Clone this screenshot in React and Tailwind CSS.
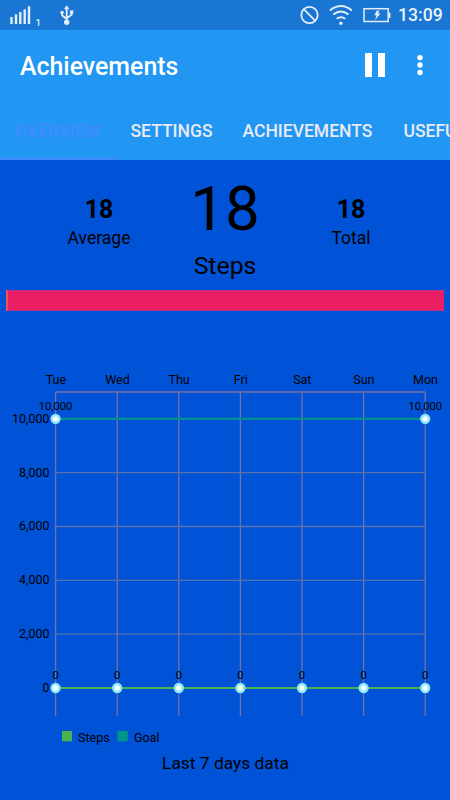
import React from 'react';

const days = ['Tue', 'Wed', 'Thu', 'Fri', 'Sat', 'Sun', 'Mon'];
const ticks = [10000, 8000, 6000, 4000, 2000, 0];
const steps = [0, 0, 0, 0, 0, 0, 0];

// chart coordinates
const LEFT = 55.6;
const STEP_X = 61.6;
const ZERO_Y = 328;
const TOP_Y = 58.8;

const xAt = (i) => LEFT + i * STEP_X;
const yAt = (value) => ZERO_Y - (value / 10000) * (ZERO_Y - TOP_Y);

const StatusBar = () => (
  <div className="flex h-[30px] shrink-0 items-center justify-between bg-[#1976d2] pr-2 pl-2.5 text-white">
    <div className="flex items-center">
      <svg width="32" height="30" viewBox="0 0 32 30" fill="#e3eefa">
        <rect x="0.3" y="17" width="2.4" height="7" />
        <rect x="4.8" y="14.3" width="2.4" height="9.7" />
        <rect x="9.1" y="12" width="2.4" height="12" />
        <rect x="13.5" y="9.3" width="2.4" height="14.7" />
        <rect x="17.8" y="6.3" width="2.4" height="17.7" />
        <text x="25.6" y="25.5" fontSize="9.5" fontWeight="500">1</text>
      </svg>
      <svg className="ml-[18px]" width="14" height="30" viewBox="0 0 14 30" fill="none" stroke="#e3eefa" strokeWidth="1.8">
        <path d="M6.7 7v15M2 13v2.2L6.7 19M11.6 12.5v2.3L6.7 18.2" />
        <path d="M6.7 5.3l2.7 4H4z" fill="#e3eefa" stroke="none" />
        <circle cx="6.7" cy="22.3" r="2.7" fill="#e3eefa" stroke="none" />
        <circle cx="2.1" cy="12.5" r="1.8" fill="#e3eefa" stroke="none" />
        <rect x="9.9" y="10.4" width="3.4" height="3.4" fill="#e3eefa" stroke="none" />
      </svg>
    </div>
    <div className="flex items-center">
      <svg width="19" height="30" viewBox="0 0 19 30" fill="none" stroke="#e3eefa" strokeWidth="1.8">
        <circle cx="9.5" cy="15" r="8.2" />
        <path d="M3.7 9.2l11.6 11.6" />
      </svg>
      <svg className="ml-2.5" width="24" height="30" viewBox="0 0 24 30" fill="none" stroke="#e3eefa" strokeWidth="1.9">
        <path d="M1 10.4Q11.9 1.6 22.8 10.4M4.3 14.6Q11.9 8.4 19.5 14.6M7.6 18.8Q11.9 15.5 16.2 18.8" />
        <circle cx="11.9" cy="23.3" r="1.7" fill="#e3eefa" stroke="none" />
      </svg>
      <svg className="ml-2.5" width="28" height="30" viewBox="0 0 28 30" fill="none" stroke="#e3eefa" strokeWidth="1.5">
        <rect x="1" y="8.7" width="24.2" height="12.8" />
        <path d="M26.6 12.5v5.5" strokeWidth="1.6" />
        <path d="M13.6 10.8h2.9l-1.3 2.7h2.3l-5.3 6.4 1.3-4.6h-2.1z" fill="#e3eefa" stroke="none" />
      </svg>
      <span className="ml-[7px] w-[44px] text-[17.6px] leading-[30px] font-medium whitespace-nowrap text-[#eaf2fb]">13:09</span>
    </div>
  </div>
);

const Header = () => (
  <header className="h-[130px] shrink-0 overflow-hidden bg-[#2196f3]">
    <div className="flex h-[70px] items-center justify-between pr-[27px] pl-5">
      <h1 className="pt-[3px] text-[24.9px] leading-[30px] font-medium whitespace-nowrap text-white">Achievements</h1>
      <div className="flex items-center gap-[32px]">
        <div className="flex gap-[6px]">
          <div className="h-6 w-[7px] bg-white"></div>
          <div className="h-6 w-[7px] bg-white"></div>
        </div>
        <svg width="6" height="24" viewBox="0 0 6 24" fill="#fff">
          <circle cx="3" cy="4.6" r="2.7" />
          <circle cx="3" cy="12" r="2.7" />
          <circle cx="3" cy="19.5" r="2.7" />
        </svg>
      </div>
    </div>
    <nav className="flex h-[60px] text-[17.5px] leading-[20px] font-medium whitespace-nowrap text-[#e9eaf3]">
      <div className="w-[116px] shrink-0 border-b-2 border-[#448aff] pt-[21px] pl-[14.5px] text-[#448aff]">OVERVIEW</div>
      <div className="w-[112px] shrink-0 pt-[21px] pl-[14.5px]">SETTINGS</div>
      <div className="w-[161px] shrink-0 pt-[21px] pl-[14.5px]">ACHIEVEMENTS</div>
      <div className="shrink-0 pt-[21px] pl-[14.5px]">USEFUL</div>
    </nav>
  </header>
);

const Stat = ({ value, label }) => (
  <div className="flex flex-1 flex-col items-center pt-[35px]">
    <span className="text-[25px] leading-[30px] font-bold">{value}</span>
    <span className="pt-[2px] text-[17.5px] leading-[22px]">{label}</span>
  </div>
);

const Chart = () => (
  <svg width="450" height="392" viewBox="0 0 450 392">
    <g stroke="#7471a5" strokeWidth="1.3">
      {days.map((day, i) => (
        <path key={day} d={`M${xAt(i)} 32V356`} />
      ))}
      <path d={`M${xAt(0)} 32H${xAt(6)}`} />
      {ticks.map((tick) => (
        <path key={tick} d={`M${xAt(0)} ${yAt(tick)}H${xAt(6)}`} stroke="#5773ad" />
      ))}
    </g>
    <path d={`M${xAt(0)} ${yAt(10000)}H${xAt(6)}`} stroke="#009688" strokeWidth="2" />
    <path d={`M${xAt(0)} ${yAt(0)}H${xAt(6)}`} stroke="#4caf50" strokeWidth="2" />

    <g fontSize="12.5" textAnchor="middle">
      {days.map((day, i) => (
        <text key={day} x={xAt(i) + 0.3} y="24">{day}</text>
      ))}
    </g>
    <g fontSize="12.5" textAnchor="end">
      {ticks.map((tick) => (
        <text key={tick} x="49.6" y={yAt(tick) + 4}>{tick.toLocaleString('en-US')}</text>
      ))}
    </g>
    <g fontSize="11.2" textAnchor="middle">
      <text x={xAt(0)} y="50">10,000</text>
      <text x={xAt(6)} y="50">10,000</text>
      {steps.map((value, i) => (
        <text key={i} x={xAt(i)} y={yAt(value) - 8.8}>{value}</text>
      ))}
    </g>
    <g fill="#fff" stroke="#8ceaff" strokeWidth="2.5">
      <circle cx={xAt(0)} cy={yAt(10000)} r="3.9" />
      <circle cx={xAt(6)} cy={yAt(10000)} r="3.9" />
      {steps.map((value, i) => (
        <circle key={i} cx={xAt(i)} cy={yAt(value)} r="3.9" />
      ))}
    </g>

    <rect x="62" y="371" width="10" height="10.3" fill="#4caf50" />
    <text x="78" y="381.5" fontSize="12.5">Steps</text>
    <rect x="117.5" y="371" width="10.3" height="10.3" fill="#009688" />
    <text x="134" y="381.5" fontSize="12.5">Goal</text>
  </svg>
);

const App = () => {
  return (
    <div className="flex h-[800px] w-[450px] flex-col overflow-hidden bg-[#0052d6] font-['Roboto',sans-serif] text-black">
      <StatusBar />
      <Header />
      <main className="flex flex-1 flex-col">
        <div className="flex h-[130px]">
          <div className="flex flex-1 pl-[27px]">
            <Stat value="18" label="Average" />
          </div>
          <div className="flex w-[108px] flex-col items-center pt-[12px]">
            <span className="text-[61.8px] leading-[75px]">18</span>
            <span className="pt-[4px] text-[24.8px] leading-[30px]">Steps</span>
          </div>
          <div className="flex flex-1 pr-[27px]">
            <Stat value="18" label="Total" />
          </div>
        </div>
        <div className="mx-[6px] h-[21px] border-y border-l-2 border-y-[#b8358c] border-l-[#f4505a] bg-[#e91e63]"></div>
        <div className="mt-[49px] h-[392px]">
          <Chart />
        </div>
        <p className="pl-px text-center text-[17.4px] leading-[22px]">Last 7 days data</p>
      </main>
    </div>
  );
};

export default App;
